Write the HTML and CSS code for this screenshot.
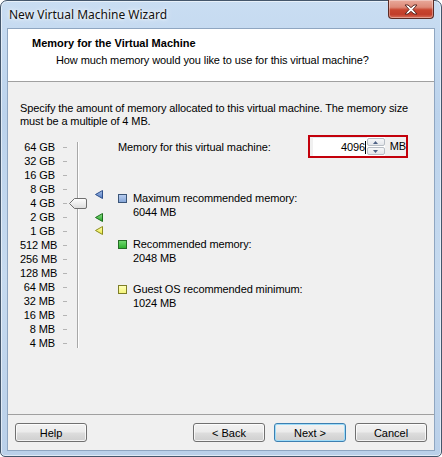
FILE: index.html
```html
<!DOCTYPE html>
<html>
<head>
<meta charset="utf-8">
<link rel="stylesheet" href="styles.css">
</head>
<body>
<div class="window">
  <div class="titlebar">
    <span class="title">New Virtual Machine Wizard</span>
    <div class="close">
      <svg width="16" height="11" viewBox="0 0 16 11"><path d="M2 1 L5 1 L8 3.6 L11 1 L14 1 L9.9 5.5 L14 10 L11 10 L8 7.4 L5 10 L2 10 L6.1 5.5 Z" fill="#fff" stroke="#5a2a24" stroke-width="1" stroke-linejoin="round"/></svg>
    </div>
  </div>
  <div class="client">
    <div class="header">
      <div class="h-title">Memory for the Virtual Machine</div>
      <div class="h-sub">How much memory would you like to use for this virtual machine?</div>
    </div>
    <div class="main">
      <p class="intro">Specify the amount of memory allocated to this virtual machine. The memory size<br>must be a multiple of 4 MB.</p>
      <div class="content">
        <div class="slider">
          <div class="labels">
            <div>64 GB</div><div>32 GB</div><div>16 GB</div><div>8 GB</div><div>4 GB</div>
            <div>2 GB</div><div>1 GB</div><div>512 MB</div><div>256 MB</div><div>128 MB</div>
            <div>64 MB</div><div>32 MB</div><div>16 MB</div><div>8 MB</div><div>4 MB</div>
          </div>
          <div class="ticks">
            <span></span><span></span><span></span><span></span><span></span>
            <span></span><span></span><span></span><span></span><span></span>
            <span></span><span></span><span></span><span></span><span></span>
          </div>
          <div class="track"></div>
          <div class="markers">
            <svg class="marker m-blue" width="8" height="9" viewBox="0 0 8 9"><defs><linearGradient id="gb" x1="0" y1="0" x2="0" y2="1"><stop offset="0" stop-color="#a9c2ea"/><stop offset="1" stop-color="#4f77bd"/></linearGradient></defs><polygon points="7.5,0.5 7.5,8.5 0.5,4.5" fill="url(#gb)" stroke="#2d4f8c"/></svg>
            <svg class="marker m-green" width="8" height="9" viewBox="0 0 8 9"><defs><linearGradient id="gg" x1="0" y1="0" x2="0" y2="1"><stop offset="0" stop-color="#8fe08f"/><stop offset="1" stop-color="#22a622"/></linearGradient></defs><polygon points="7.5,0.5 7.5,8.5 0.5,4.5" fill="url(#gg)" stroke="#1c6e1c"/></svg>
            <svg class="marker m-yellow" width="8" height="9" viewBox="0 0 8 9"><defs><linearGradient id="gy" x1="0" y1="0" x2="0" y2="1"><stop offset="0" stop-color="#ffffb0"/><stop offset="1" stop-color="#e6e640"/></linearGradient></defs><polygon points="7.5,0.5 7.5,8.5 0.5,4.5" fill="url(#gy)" stroke="#8c8c1e"/></svg>
          </div>
          <svg class="thumb" width="19" height="11" viewBox="0 0 19 11"><defs><linearGradient id="gt" x1="0" y1="0" x2="0" y2="1"><stop offset="0" stop-color="#ffffff"/><stop offset="1" stop-color="#dcdcdc"/></linearGradient></defs><path d="M0.5 5.5 L5.5 0.5 H16 Q17.5 0.5 17.5 2 V9 Q17.5 10.5 16 10.5 H5.5 Z" fill="url(#gt)" stroke="#6f6f6f"/></svg>
        </div>
        <div class="right">
          <div class="mem-row">
            <span class="mem-label">Memory for this virtual machine:</span>
            <div class="mem-box">
              <div class="field">4096<span class="caret"></span></div>
              <div class="spin">
                <span class="sbtn"><svg width="5" height="3" viewBox="0 0 5 3"><polygon points="0,3 5,3 2.5,0" fill="#4d6185"/></svg></span>
                <span class="sbtn"><svg width="5" height="3" viewBox="0 0 5 3"><polygon points="0,0 5,0 2.5,3" fill="#4d6185"/></svg></span>
              </div>
              <span class="unit">MB</span>
            </div>
          </div>
          <div class="legend">
            <div class="item"><span class="sq sq-blue"></span><div>Maximum recommended memory:<br>6044 MB</div></div>
            <div class="item"><span class="sq sq-green"></span><div>Recommended memory:<br>2048 MB</div></div>
            <div class="item"><span class="sq sq-yellow"></span><div>Guest OS recommended minimum:<br>1024 MB</div></div>
          </div>
        </div>
      </div>
    </div>
    <div class="footer">
      <button class="btn">Help</button>
      <span class="spacer"></span>
      <button class="btn">&lt; Back</button>
      <button class="btn btn-default">Next &gt;</button>
      <button class="btn">Cancel</button>
    </div>
  </div>
</div>
</body>
</html>
```

FILE: styles.css
```css
* { box-sizing: border-box; }
html, body { margin: 0; padding: 0; }
body {
  width: 442px;
  height: 457px;
  overflow: hidden;
  background: #ffffff;
  font-family: "Liberation Sans", Arial, sans-serif;
  font-size: 11px;
  letter-spacing: -0.1px;
  color: #000;
}
.window {
  width: 442px;
  height: 457px;
  border: 1px solid #44566b;
  border-radius: 7px 7px 5px 5px;
  background: linear-gradient(to bottom, #c9ddf2 0%, #bcd3ec 25%, #c6daef 60%, #bad0e9 100%);
  box-shadow: inset 0 0 0 1px rgba(255,255,255,0.55);
  display: flex;
  flex-direction: column;
  padding: 0 7px 6px 7px;
}
.titlebar {
  height: 28px;
  display: flex;
  align-items: flex-start;
  flex: none;
}
.title {
  font-family: "Noto Sans", "Liberation Sans", sans-serif;
  font-size: 12px;
  letter-spacing: 0;
  line-height: 28px;
  padding-left: 1px;
  color: #111;
  text-shadow: 0 0 6px #ffffff, 0 0 3px #ffffff;
}
.close {
  margin-left: auto;
  margin-top: -1px;
  width: 46px;
  height: 19px;
  border: 1px solid #5c2b24;
  border-top: none;
  border-radius: 0 0 4px 4px;
  background: linear-gradient(to bottom, #e9a99b 0%, #dd8a78 40%, #c8452f 55%, #c13d2a 80%, #d8705a 100%);
  box-shadow: inset 0 0 0 1px rgba(255,255,255,0.35);
  display: flex;
  align-items: center;
  justify-content: center;
}
.client {
  flex: 1;
  display: flex;
  flex-direction: column;
  background: #f0f0f0;
  box-shadow: 0 0 0 1px #8fa6c1;
}
.header {
  height: 53px;
  flex: none;
  background: #ffffff;
  border-bottom: 1px solid #a0a0a0;
  padding: 8px 0 0 24px;
  line-height: 13px;
}
.h-title { font-weight: bold; letter-spacing: 0; }
.h-sub { padding-left: 24px; margin-top: 4px; }
.main {
  flex: 1;
  padding: 20px 0 0 12px;
}
.intro {
  margin: 0;
  line-height: 13px;
}
.content {
  display: flex;
  align-items: flex-start;
  margin-top: 7px;
}
.slider {
  position: relative;
  display: flex;
  margin-top: 5px;
}
.labels {
  width: 35px;
  text-align: right;
}
.labels div { height: 14px; line-height: 14px; white-space: nowrap; }
.ticks {
  margin-left: 8px;
  width: 4px;
  display: flex;
  flex-direction: column;
}
.ticks span {
  height: 14px;
  display: flex;
  align-items: center;
}
.ticks span::before {
  content: "";
  display: block;
  width: 4px;
  height: 1px;
  background: #b4b4b4;
}
.track {
  margin: 2px 0 2px 10px;
  width: 2px;
  border-left: 1px solid #a8a8a8;
  background: #ffffff;
}
.markers {
  position: relative;
  margin-left: 16px;
  width: 8px;
}
.marker { position: absolute; left: 0; display: block; }
.m-blue { top: 50px; }
.m-green { top: 73px; }
.m-yellow { top: 86px; }
.thumb {
  position: absolute;
  left: 49px;
  top: 58px;
  display: block;
}
.right {
  margin-left: 15px;
}
.mem-row {
  display: flex;
  align-items: center;
  height: 23px;
}
.mem-label { width: 190px; }
.mem-box {
  width: 100px;
  height: 23px;
  border: 2px solid #c3000b;
  display: flex;
  align-items: stretch;
  padding: 0 0 0 3px;
}
.field {
  width: 55px;
  background: #ffffff;
  border-top: 1px solid #e3e9ef;
  text-align: right;
  line-height: 18px;
  padding-right: 1px;
  display: flex;
  justify-content: flex-end;
  align-items: center;
}
.caret {
  display: inline-block;
  width: 1px;
  height: 13px;
  background: #000;
}
.spin {
  width: 18px;
  display: flex;
  flex-direction: column;
  gap: 1px;
  padding: 1px 0;
  background: #ffffff;
}
.sbtn {
  flex: 1;
  border: 1px solid #b8bec6;
  border-radius: 2px;
  background: linear-gradient(to bottom, #f6f7f9, #e3e6ea);
  display: flex;
  align-items: center;
  justify-content: center;
}
.sbtn svg { display: block; }
.unit {
  margin-left: 5px;
  line-height: 19px;
}
.legend {
  margin-top: 33px;
  display: flex;
  flex-direction: column;
  gap: 17.5px;
}
.item {
  display: flex;
  align-items: flex-start;
  line-height: 14px;
}
.sq {
  width: 9px;
  height: 9px;
  margin-top: 3px;
  margin-right: 6px;
  flex: none;
  border: 1px solid;
}
.sq-blue { background: linear-gradient(#b8cdef, #86a6d8); border-color: #3b5578; }
.sq-green { background: linear-gradient(#6fd86f, #2fb12f); border-color: #256b25; }
.sq-yellow { background: linear-gradient(#ffffb8, #f5f57a); border-color: #7e7e28; }
.footer {
  flex: none;
  border-top: 1px solid #a0a0a0;
  display: flex;
  align-items: center;
  gap: 9px;
  padding: 8px 7px 8px 7px;
}
.spacer { flex: 1; }
.btn {
  width: 72px;
  height: 19px;
  border: 1px solid #707070;
  border-radius: 3px;
  background: linear-gradient(to bottom, #f2f2f2 0%, #ebebeb 48%, #dddddd 52%, #cfcfcf 100%);
  box-shadow: inset 0 0 0 1px rgba(255,255,255,0.75);
  font-family: "Liberation Sans", Arial, sans-serif;
  font-size: 11px;
  color: #000;
  padding: 0;
  line-height: 16px;
}
.btn-default {
  border-color: #3c7fb1;
  box-shadow: inset 0 0 0 1px #9fdcf8;
}
```
